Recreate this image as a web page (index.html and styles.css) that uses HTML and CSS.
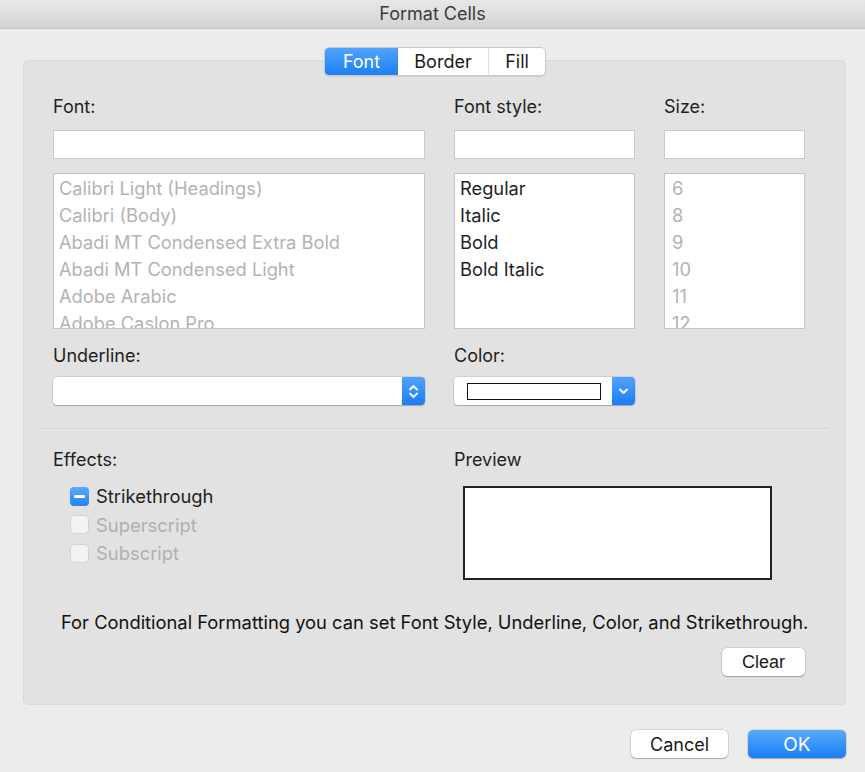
FILE: index.html
```html
<!DOCTYPE html>
<html>
<head>
<meta charset="utf-8">
<link rel="stylesheet" href="styles.css">
</head>
<body>
<div class="window">
  <div class="titlebar">Format Cells</div>
  <div class="body">
    <div class="tabs">
      <div class="tab active">Font</div>
      <div class="tab">Border</div>
      <div class="tab">Fill</div>
    </div>
    <div class="panel">
      <div class="grid">
        <div class="col col-font">
          <div class="label">Font:</div>
          <div class="input"></div>
          <div class="list disabled">
            <div class="item">Calibri Light (Headings)</div>
            <div class="item">Calibri (Body)</div>
            <div class="item">Abadi MT Condensed Extra Bold</div>
            <div class="item">Abadi MT Condensed Light</div>
            <div class="item">Adobe Arabic</div>
            <div class="item">Adobe Caslon Pro</div>
          </div>
        </div>
        <div class="col col-style">
          <div class="label">Font style:</div>
          <div class="input"></div>
          <div class="list">
            <div class="item">Regular</div>
            <div class="item">Italic</div>
            <div class="item">Bold</div>
            <div class="item">Bold Italic</div>
          </div>
        </div>
        <div class="col col-size">
          <div class="label">Size:</div>
          <div class="input"></div>
          <div class="list disabled">
            <div class="item">6</div>
            <div class="item">8</div>
            <div class="item">9</div>
            <div class="item">10</div>
            <div class="item">11</div>
            <div class="item">12</div>
          </div>
        </div>
      </div>

      <div class="row2">
        <div class="col col-font">
          <div class="label">Underline:</div>
          <div class="select">
            <div class="select-field"></div>
            <div class="stepper">
              <svg width="11" height="17" viewBox="0 0 11 17"><path d="M2 6.5 L5.5 3 L9 6.5 M2 10.5 L5.5 14 L9 10.5" fill="none" stroke="#fff" stroke-width="1.8" stroke-linecap="round" stroke-linejoin="round"/></svg>
            </div>
          </div>
        </div>
        <div class="col col-style">
          <div class="label">Color:</div>
          <div class="select">
            <div class="select-field color-field"><div class="swatch"></div></div>
            <div class="stepper">
              <svg width="11" height="8" viewBox="0 0 11 8"><path d="M2 2.5 L5.5 6 L9 2.5" fill="none" stroke="#fff" stroke-width="1.8" stroke-linecap="round" stroke-linejoin="round"/></svg>
            </div>
          </div>
        </div>
      </div>

      <div class="separator"></div>

      <div class="row3">
        <div class="effects">
          <div class="label">Effects:</div>
          <div class="checks">
            <div class="check">
              <span class="box on"><span class="dash"></span></span>
              <span>Strikethrough</span>
            </div>
            <div class="check off">
              <span class="box"></span>
              <span>Superscript</span>
            </div>
            <div class="check off">
              <span class="box"></span>
              <span>Subscript</span>
            </div>
          </div>
        </div>
        <div class="preview">
          <div class="label">Preview</div>
          <div class="preview-box"></div>
        </div>
      </div>

      <div class="note">For Conditional Formatting you can set Font Style, Underline, Color, and Strikethrough.</div>
      <div class="clear-row">
        <div class="btn clear">Clear</div>
      </div>
    </div>
    <div class="footer">
      <div class="btn cancel">Cancel</div>
      <div class="btn ok">OK</div>
    </div>
  </div>
</div>
</body>
</html>
```

FILE: styles.css
```css
* { box-sizing: border-box; }
html, body {
  margin: 0;
  padding: 0;
  background: #ececec;
}
body {
  font-family: Inter, "Liberation Sans", Arial, sans-serif;
  font-size: 17px;
  color: #1f1f1f;
  width: 865px;
  height: 772px;
  overflow: hidden;
}
.window {
  width: 865px;
  height: 772px;
  background: #ececec;
}
.titlebar {
  height: 29px;
  background: linear-gradient(#e8e8e8, #d3d3d3);
  border-bottom: 1px solid #c4c4c4;
  text-align: center;
  font-family: Inter, "Liberation Sans", Arial, sans-serif;
  font-size: 18px;
  line-height: 28px;
  color: #3a3a3a;
}
.body {
  padding: 18px 19px 0 23px;
}
.tabs {
  display: flex;
  width: 222px;
  height: 29px;
  margin: 0 0 0 301px;
  border: 1px solid #c9c9c9;
  border-radius: 5px;
  background: #fff;
  position: relative;
  z-index: 2;
  box-shadow: 0 1px 1px rgba(0,0,0,0.08);
  overflow: hidden;
}
.tab {
  display: flex;
  align-items: center;
  justify-content: center;
  font-size: 18px;
  color: #1a1a1a;
  height: 100%;
}
.tab:nth-child(1) { width: 73px; }
.tab:nth-child(2) { width: 90px; }
.tab:nth-child(3) { width: 57px; border-left: 1px solid #e0e0e0; }
.tab.active {
  background: linear-gradient(#50a4fb, #1b7ff6);
  color: #fff;
}
.panel {
  margin-top: -16px;
  width: 823px;
  height: 645px;
  background: #e2e2e2;
  border: 1px solid #dadada;
  border-radius: 5px;
  padding: 36px 0 0 29px;
}
.grid, .row2 {
  display: flex;
}
.col-font { width: 372px; margin-right: 29px; }
.col-style { width: 181px; margin-right: 29px; }
.col-size { width: 141px; }
.label {
  font-size: 18px;
  line-height: 20px;
  height: 20px;
  color: #1f1f1f;
}
.input {
  margin-top: 13px;
  height: 29px;
  background: #fff;
  border: 1px solid #cbcbcb;
}
.list {
  margin-top: 14px;
  height: 156px;
  background: #fff;
  border: 1px solid #c4c4c4;
  padding: 1px 0 0 5px;
  overflow: hidden;
}
.item {
  font-size: 18.3px;
  line-height: 27px;
  height: 27px;
  color: #1f1f1f;
  white-space: nowrap;
}
.list.disabled .item { color: #b3b3b3; }
.col-size .item { padding-left: 2px; }

.row2 { margin-top: 17px; }
.select {
  margin-top: 11px;
  height: 28px;
  display: flex;
  border-radius: 4px;
  background: #fff;
  box-shadow: 0 0 0 0.5px rgba(0,0,0,0.18), 0 1px 1px rgba(0,0,0,0.2);
  overflow: hidden;
}
.select-field { flex: 1; }
.stepper {
  width: 23px;
  background: linear-gradient(#4fa3fb, #1a7ef6);
  display: flex;
  align-items: center;
  justify-content: center;
}
.color-field {
  padding: 6px 11px 0 13px;
}
.swatch {
  width: 134px;
  height: 17px;
  border: 1.5px solid #111;
  background: #fff;
}
.separator {
  margin: 23px 0 0 -13px;
  width: 789px;
  height: 2px;
  border-top: 1px solid #cfcfcf;
  border-bottom: 1px solid #ebebeb;
}
.row3 {
  display: flex;
  margin-top: 20px;
}
.effects { width: 401px; }
.checks {
  margin-top: 12px;
  padding-left: 17px;
}
.check {
  display: flex;
  align-items: center;
  height: 28.5px;
  font-size: 18.4px;
  color: #1f1f1f;
}
.check.off { color: #b0b0b0; }
.box {
  width: 19px;
  height: 19px;
  border-radius: 4px;
  margin-right: 7px;
  background: #f3f3f3;
  border: 1px solid #d4d4d4;
  display: flex;
  align-items: center;
  justify-content: center;
}
.box.on {
  background: linear-gradient(#5aa9fb, #2184f6);
  border: none;
}
.dash {
  width: 11px;
  height: 2.5px;
  background: #fff;
  border-radius: 1px;
}
.preview-box {
  margin: 16px 0 0 9px;
  width: 309px;
  height: 94px;
  background: #fff;
  border: 2px solid #222;
}
.note {
  margin-top: 32px;
  margin-left: 8px;
  font-family: Inter, "Liberation Sans", Arial, sans-serif;
  font-size: 18.35px;
  line-height: 20px;
  color: #111;
  white-space: nowrap;
}
.clear-row {
  display: flex;
  justify-content: flex-end;
  padding-right: 40px;
  margin-top: 16px;
}
.btn {
  display: flex;
  align-items: center;
  justify-content: center;
  height: 28px;
  border-radius: 5px;
  background: #fff;
  box-shadow: 0 0 0 0.5px rgba(0,0,0,0.2), 0 1px 1px rgba(0,0,0,0.2);
  font-size: 18px;
  color: #1a1a1a;
}
.clear { width: 83px; font-family: "Liberation Sans", Arial, sans-serif; }
.footer {
  display: flex;
  justify-content: flex-end;
  margin-top: 25px;
  gap: 20px;
}
.cancel { width: 97px; }
.ok {
  width: 98px;
  background: linear-gradient(#5aaafb, #1a7ef6);
  color: #fff;
  font-size: 19px;
}
```
